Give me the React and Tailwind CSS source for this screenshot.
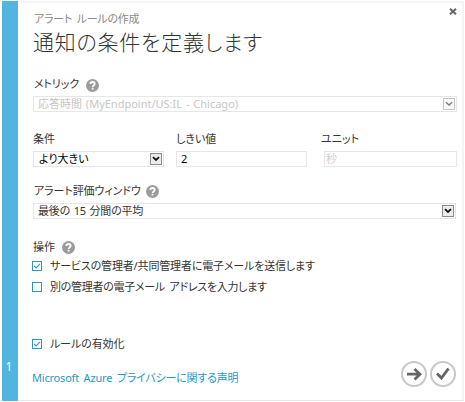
import React from "react";

function Help() {
  return (
    <svg width="13" height="13" viewBox="0 0 13 13" className="shrink-0">
      <circle cx="6.5" cy="6.5" r="6.5" fill="#9b9b9b" />
      <path d="M4.3 5.1C4.3 3.6 5.3 3 6.5 3s2.2.7 2.2 1.9c0 1.4-2 1.5-2 3" fill="none" stroke="#fff" strokeWidth="1.8" />
      <rect x="5.7" y="8.8" width="1.8" height="1.7" fill="#fff" />
    </svg>
  );
}

function Drop({ muted }) {
  return (
    <span className={"flex h-[12px] w-[12px] shrink-0 items-center justify-center border " + (muted ? "border-[#c6c6c6] bg-[#f8f8f8]" : "border-[#8d8d8d] bg-[#ececec]")}>
      <svg width="8" height="6" viewBox="0 0 8 6">
        <path d="M1 1.2L4 4L7 1.2" fill="none" stroke={muted ? "#777" : "#111"} strokeWidth={muted ? "1.3" : "1.8"} />
      </svg>
    </span>
  );
}

function Check({ checked }) {
  return (
    <svg width="10" height="10" viewBox="0 0 10 10" className="shrink-0">
      <rect x="0.5" y="0.5" width="9" height="9" fill="#fff" stroke="#2f93c8" />
      {checked && <path d="M2.2 5L4.2 7L8 2.8" fill="none" stroke="#3b9bcb" strokeWidth="1.2" />}
    </svg>
  );
}

const field = "flex h-[16px] items-center border border-[#e6e6e6] bg-white text-[11px]";

export default function App() {
  return (
    <div className="h-[402px] w-[465px] overflow-hidden bg-white pt-px pl-[2px] font-['Noto_Sans','Noto_Sans_CJK_JP',sans-serif] text-[11px] leading-[16px] whitespace-nowrap text-[#333] [font-feature-settings:'palt']">
      <div className="flex h-[400px] w-[462px]">
        <aside className="flex w-[16px] shrink-0 items-end justify-center bg-[#52b5e0] pr-[2px] pb-[26px] text-[12px] leading-[16px] text-white">1</aside>
        <main className="flex min-w-0 flex-1 flex-col border-t-2 border-r-2 border-b border-[#f4f4f4] border-b-[#e9e9e9] pl-[14px]">
          <div className="flex h-[24px] items-end justify-between pl-[2px]">
            <span className="tracking-[-0.25px] text-[#8a8a8a] [word-spacing:2px]">アラート ルールの作成</span>
            <svg width="8" height="7" viewBox="0 0 8 7" className="mr-[5px] mb-[12px]">
              <path d="M1 .7L7 6.3M7 .7L1 6.3" stroke="#666" strokeWidth="2" />
            </svg>
          </div>
          <h1 className="mt-px h-[30px] pl-px text-[21px] leading-[28px] font-light tracking-[0.75px]">通知の条件を定義します</h1>
          <div className="mt-[18px] flex h-[20px] items-start gap-[7px] pl-[2px]">
            <span className="tracking-[-0.1px]">メトリック</span><span className="pt-[3px]"><Help /></span>
          </div>
          <div className={field + " ml-px w-[424px] justify-between pr-px pl-[4px] text-[#c6c6c6]"}>
            <span className="[word-spacing:1px]">応答時間 (MyEndpoint/US:IL - Chicago)</span><Drop muted />
          </div>
          <div className="mt-[19px] flex h-[20px] pl-px">
            <span className="w-[143px]">条件</span>
            <span className="w-[145px]">しきい値</span>
            <span>ユニット</span>
          </div>
          <div className="ml-px flex">
            <div className={field + " w-[131px] justify-between pr-px pl-[5px] text-black"}><span>より大きい</span><Drop /></div>
            <div className={field + " ml-[12px] w-[131px] pl-[4px] text-black"}>2</div>
            <div className={field + " ml-[17px] w-[133px] pl-px text-[#cfcfcf]"}>秒</div>
          </div>
          <div className="mt-[16px] flex h-[20px] items-start gap-[5px] pl-[2px]">
            <span className="tracking-[-0.1px]">アラート評価ウィンドウ</span><span className="pt-[2px]"><Help /></span>
          </div>
          <div className={field + " ml-px w-[423px] justify-between pr-px pl-[4px]"}><span className="tracking-[-0.2px] [word-spacing:1px]">最後の 15 分間の平均</span><Drop /></div>
          <div className="mt-[20px] flex h-[16px] items-start gap-[7px] pl-px">
            <span>操作</span><span className="pt-[2px]"><Help /></span>
          </div>
          <div className="flex h-[21px] items-center gap-[8px]"><Check checked /><span className="tracking-[-0.15px]">サービスの管理者/共同管理者に電子メールを送信します</span></div>
          <div className="flex h-[21px] items-center gap-[8px]"><Check /><span className="tracking-[-0.28px] [word-spacing:2px]">別の管理者の電子メール アドレスを入力します</span></div>
          <div className="mt-[36px] flex h-[21px] items-center gap-[8px]"><Check checked /><span className="tracking-[-0.1px]">ルールの有効化</span></div>
          <div className="mt-[4px] flex justify-between">
            <a className="pt-[12px] tracking-[-0.2px] text-[#1a9bcb] [word-spacing:2px]">Microsoft Azure プライバシーに関する声明</a>
            <div className="mt-[3px] mr-[6px] flex gap-[3px]">
              <svg width="26" height="26" viewBox="0 0 26 26">
                <circle cx="13" cy="13" r="12" fill="#fff" stroke="#c8c8c8" strokeWidth="2" />
                <path d="M6 13.2H19M13.5 8L19 13.2L13.5 18.4" fill="none" stroke="#666" strokeWidth="2.8" />
              </svg>
              <svg width="26" height="26" viewBox="0 0 26 26">
                <circle cx="13" cy="13" r="12" fill="#fff" stroke="#c8c8c8" strokeWidth="2" />
                <path d="M7 12.5L11.5 17L18.5 7.5" fill="none" stroke="#666" strokeWidth="2.8" />
              </svg>
            </div>
          </div>
        </main>
      </div>
    </div>
  );
}
